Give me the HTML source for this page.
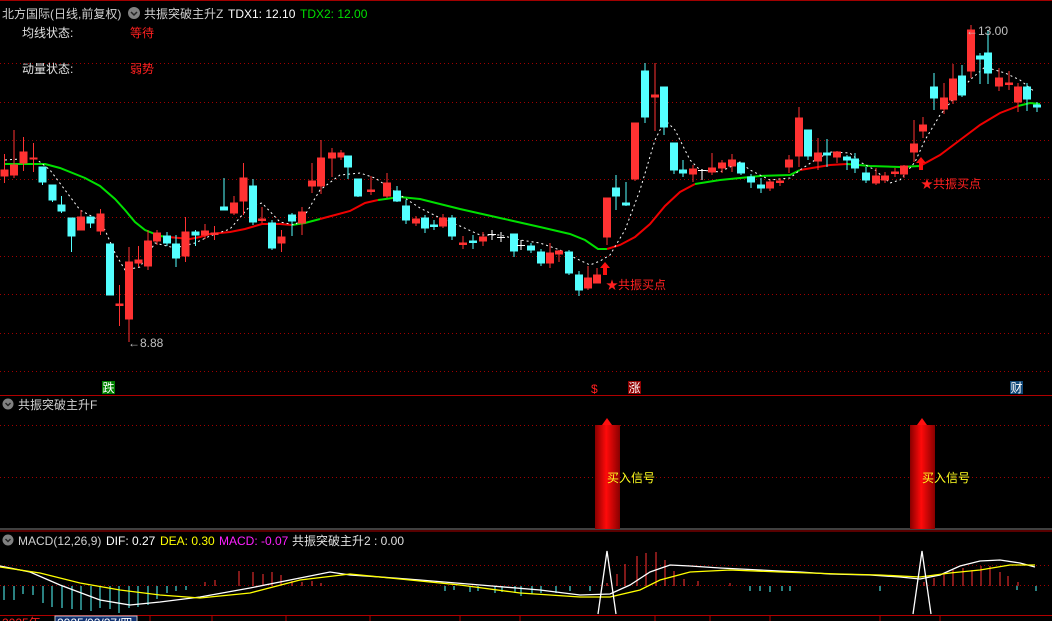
<!DOCTYPE html>
<html><head><meta charset="utf-8"><style>
html,body{margin:0;padding:0;background:#000;width:1052px;height:621px;overflow:hidden}
svg{display:block}
text{font-family:"Liberation Sans","Noto Sans CJK SC",sans-serif;font-size:12px}
</style></head><body>
<svg width="1052" height="621" viewBox="0 0 1052 621" xmlns="http://www.w3.org/2000/svg">
<g stroke="#a00000" stroke-dasharray="1,3" stroke-width="1">
<line x1="0" y1="63.5" x2="1052" y2="63.5"/><line x1="0" y1="102.5" x2="1052" y2="102.5"/>
<line x1="0" y1="140.5" x2="1052" y2="140.5"/><line x1="0" y1="179.5" x2="1052" y2="179.5"/>
<line x1="0" y1="217.5" x2="1052" y2="217.5"/><line x1="0" y1="256.5" x2="1052" y2="256.5"/>
<line x1="0" y1="294.5" x2="1052" y2="294.5"/><line x1="0" y1="333.5" x2="1052" y2="333.5"/>
<line x1="0" y1="371.5" x2="1052" y2="371.5"/>
<line x1="0" y1="425.5" x2="1052" y2="425.5"/><line x1="0" y1="477.5" x2="1052" y2="477.5"/>
<line x1="0" y1="565.5" x2="1052" y2="565.5"/><line x1="0" y1="585.5" x2="1052" y2="585.5"/>
</g>
<line x1="0" y1="0.5" x2="1052" y2="0.5" stroke="#a00000"/>
<line x1="0" y1="395.5" x2="1052" y2="395.5" stroke="#b00000"/>
<line x1="0" y1="529" x2="1052" y2="529" stroke="#808080"/>
<line x1="0" y1="531" x2="1052" y2="531" stroke="#b00000"/>
<line x1="0" y1="615.5" x2="1052" y2="615.5" stroke="#b00000"/>

<text x="2" y="18" fill="#d0d0d0" font-size="13">北方国际(日线,前复权)</text>
<circle cx="134" cy="13" r="6" fill="#808080"/><path d="M131 12l3 3 3-3" stroke="#222" fill="none" stroke-width="1.5"/>
<text x="144" y="18" fill="#d0d0d0" font-size="13">共振突破主升Z</text>
<text x="228" y="18" fill="#fff" font-size="13">TDX1: 12.10</text>
<text x="300" y="18" fill="#00e000" font-size="13">TDX2: 12.00</text>
<text x="22" y="37" fill="#e0e0e0" font-size="13">均线状态:</text>
<text x="130" y="37" fill="#ff2020" font-size="13">等待</text>
<text x="22" y="73" fill="#e0e0e0" font-size="13">动量状态:</text>
<text x="130" y="73" fill="#ff2020" font-size="13">弱势</text>

<polyline fill="none" stroke="#00e000" stroke-width="2" points="4,164 45,164 60,168 85,178 100,186 115,199 125,210 135,222 145,230 160,236 168,237"/>
<polyline fill="none" stroke="#ee0000" stroke-width="2" points="168,237 190,239 200,237 210,234 230,232 245,229 262,224 280,224 292,225"/>
<polyline fill="none" stroke="#00e000" stroke-width="2" points="292,225 305,223 320,219"/>
<polyline fill="none" stroke="#ee0000" stroke-width="2" points="320,219 335,215 350,211 365,203 378,200"/>
<polyline fill="none" stroke="#00e000" stroke-width="2" points="378,200 400,197 420,199 440,204 460,209 500,218 540,227 570,234 585,240 598,249 607,249"/>
<polyline fill="none" stroke="#ee0000" stroke-width="2" points="607,249 620,245 635,237 650,224 665,206 680,192 695,184"/>
<polyline fill="none" stroke="#00e000" stroke-width="2" points="695,184 720,180 760,176 790,175 800,170"/>
<polyline fill="none" stroke="#ee0000" stroke-width="2" points="800,170 830,165 847,164"/>
<polyline fill="none" stroke="#00e000" stroke-width="2" points="847,164 870,166 900,167 920,166"/>
<polyline fill="none" stroke="#ee0000" stroke-width="2" points="920,166 940,155 960,140 980,125 1000,113 1018,106"/>
<polyline fill="none" stroke="#00e000" stroke-width="2" points="1018,106 1030,103 1040,104"/>
<polyline fill="none" stroke="#fff" stroke-width="1" stroke-dasharray="2,3" points="5,160 35,158 50,170 65,190 80,210 95,218 105,230 115,253 125,270 140,267 155,243 175,248 195,243 210,236 230,229 250,206 262,203 280,222 295,225 305,215 320,190 340,175 360,173 375,178 390,188 400,195 420,208 440,218 460,226 480,235 500,235 520,240 540,243 560,250 575,258 590,265 600,261 610,255 625,230 640,190 655,140 665,120 675,130 690,160 700,170 720,172 740,162 750,170 770,180 790,178 800,170 815,160 830,152 850,153 860,162 875,170 890,183 900,180 915,162 925,140 940,115 955,97 970,80 985,67 1005,73 1020,80 1035,92"/>

<g stroke-width="1">
<g fill="#ff3232" stroke="#ff3232">
<line x1="4.5" y1="154" x2="4.5" y2="183"/><rect x="1" y="170" width="7" height="6"/>
<line x1="14" y1="130" x2="14" y2="178"/><rect x="10.5" y="165" width="7" height="10"/>
<line x1="23.5" y1="137" x2="23.5" y2="171"/><rect x="20" y="152" width="7" height="11"/>
<line x1="33.5" y1="143" x2="33.5" y2="172"/><rect x="30" y="158" width="7" height="1"/>
<line x1="81" y1="210" x2="81" y2="230"/><rect x="77.5" y="217" width="7" height="13"/>
<line x1="100.5" y1="209" x2="100.5" y2="235"/><rect x="97" y="214" width="7" height="17"/>
<line x1="119.5" y1="285" x2="119.5" y2="326"/><rect x="116" y="304" width="7" height="1.5"/>
<line x1="129" y1="247" x2="129" y2="342"/><rect x="125.5" y="262" width="7" height="57"/>
<line x1="138.5" y1="246" x2="138.5" y2="267"/><rect x="135" y="260" width="7" height="3"/>
<line x1="148" y1="230" x2="148" y2="270"/><rect x="144.5" y="241" width="7" height="25"/>
<line x1="157" y1="230" x2="157" y2="245"/><rect x="153.5" y="233" width="7" height="8"/>
<line x1="185.5" y1="217" x2="185.5" y2="262"/><rect x="182" y="232" width="7" height="24"/>
<line x1="205" y1="224" x2="205" y2="239"/><rect x="201.5" y="231" width="7" height="4"/>
<line x1="214.5" y1="226" x2="214.5" y2="240"/><rect x="211" y="233" width="7" height="1.5"/>
<line x1="234" y1="196" x2="234" y2="215"/><rect x="230.5" y="203" width="7" height="10"/>
<line x1="243.5" y1="163" x2="243.5" y2="215"/><rect x="240" y="178" width="7" height="23"/>
<line x1="262" y1="207" x2="262" y2="223"/><rect x="258.5" y="219" width="7" height="1.5"/>
<line x1="281.5" y1="230" x2="281.5" y2="252"/><rect x="278" y="237" width="7" height="6"/>
<line x1="302" y1="207" x2="302" y2="235"/><rect x="298.5" y="212" width="7" height="11"/>
<line x1="312" y1="163" x2="312" y2="193"/><rect x="308.5" y="181" width="7" height="5"/>
<line x1="321" y1="140" x2="321" y2="194"/><rect x="317.5" y="158" width="7" height="28"/>
<line x1="332" y1="148" x2="332" y2="177"/><rect x="328.5" y="153" width="7" height="5"/>
<line x1="341" y1="150" x2="341" y2="160"/><rect x="338" y="153" width="6" height="4"/>
<line x1="371" y1="176" x2="371" y2="195"/><rect x="367.5" y="190" width="7" height="1.5"/>
<line x1="387" y1="173" x2="387" y2="198"/><rect x="383.5" y="183" width="7" height="13"/>
<line x1="416" y1="216" x2="416" y2="226"/><rect x="412.5" y="219" width="7" height="4"/>
<line x1="443" y1="214" x2="443" y2="228"/><rect x="439.5" y="218" width="7" height="8"/>
<line x1="463" y1="236" x2="463" y2="249"/><rect x="459.5" y="243" width="7" height="1.5"/>
<line x1="483" y1="232" x2="483" y2="246"/><rect x="479.5" y="237" width="7" height="4"/>
<line x1="550" y1="243" x2="550" y2="268"/><rect x="546.5" y="253" width="7" height="10"/>
<line x1="559" y1="250" x2="559" y2="262"/><rect x="555.5" y="251" width="7" height="3"/>
<line x1="588" y1="266" x2="588" y2="290"/><rect x="584.5" y="278" width="7" height="10"/>
<line x1="597" y1="268" x2="597" y2="283"/><rect x="593.5" y="275" width="7" height="8"/>
<line x1="607" y1="198" x2="607" y2="245"/><rect x="603.5" y="198" width="7" height="39"/>
<line x1="635" y1="123" x2="635" y2="181"/><rect x="631.5" y="123" width="7" height="56"/>
<line x1="655" y1="63" x2="655" y2="131"/><rect x="651.5" y="95" width="7" height="2"/>
<line x1="693" y1="165" x2="693" y2="182"/><rect x="689.5" y="169" width="7" height="5"/>
<line x1="712" y1="153" x2="712" y2="175"/><rect x="708.5" y="168" width="7" height="4"/>
<line x1="722" y1="160" x2="722" y2="173"/><rect x="718.5" y="163" width="7" height="5"/>
<line x1="732" y1="154" x2="732" y2="172"/><rect x="728.5" y="160" width="7" height="6"/>
<line x1="770" y1="180" x2="770" y2="191"/><rect x="766.5" y="182" width="7" height="6"/>
<line x1="780" y1="178" x2="780" y2="186"/><rect x="776.5" y="181" width="7" height="1.5"/>
<line x1="789" y1="155" x2="789" y2="173"/><rect x="785.5" y="160" width="7" height="7"/>
<line x1="799" y1="107" x2="799" y2="167"/><rect x="795.5" y="118" width="7" height="38"/>
<line x1="818" y1="138" x2="818" y2="170"/><rect x="814.5" y="153" width="7" height="8"/>
<line x1="837" y1="151" x2="837" y2="163"/><rect x="833.5" y="152" width="7" height="5"/>
<line x1="876" y1="168" x2="876" y2="185"/><rect x="872.5" y="176" width="7" height="7"/>
<line x1="885" y1="172" x2="885" y2="183"/><rect x="881.5" y="176" width="7" height="4"/>
<line x1="895" y1="168" x2="895" y2="177"/><rect x="891.5" y="172" width="7" height="1.5"/>
<line x1="904" y1="165" x2="904" y2="178"/><rect x="900.5" y="166" width="7" height="8"/>
<line x1="914" y1="120" x2="914" y2="162"/><rect x="910.5" y="144" width="7" height="8"/>
<line x1="923" y1="117" x2="923" y2="138"/><rect x="919.5" y="125" width="7" height="6"/>
<line x1="944" y1="83" x2="944" y2="114"/><rect x="940.5" y="98" width="7" height="11"/>
<line x1="953" y1="64" x2="953" y2="104"/><rect x="949.5" y="79" width="7" height="21"/>
<line x1="971" y1="25" x2="971" y2="78"/><rect x="967.5" y="30" width="7" height="41"/>
<line x1="999" y1="68" x2="999" y2="91"/><rect x="995.5" y="78" width="7" height="8"/>
<line x1="1009" y1="71" x2="1009" y2="90"/><rect x="1005.5" y="83" width="7" height="1.5"/>
<line x1="1018" y1="83" x2="1018" y2="112"/><rect x="1014.5" y="87" width="7" height="15"/>
</g>
<g fill="#54ffff" stroke="#54ffff">
<line x1="42.5" y1="167" x2="42.5" y2="185"/><rect x="39" y="167" width="7" height="15"/>
<line x1="52.5" y1="185" x2="52.5" y2="202"/><rect x="49" y="185" width="7" height="15"/>
<line x1="61.5" y1="196" x2="61.5" y2="213"/><rect x="58" y="205" width="7" height="6"/>
<line x1="71.5" y1="218" x2="71.5" y2="252"/><rect x="68" y="218" width="7" height="18"/>
<line x1="90.5" y1="217" x2="90.5" y2="228"/><rect x="87" y="217" width="7" height="6"/>
<line x1="110" y1="244" x2="110" y2="295"/><rect x="106.5" y="244" width="7" height="51"/>
<line x1="167" y1="232" x2="167" y2="246"/><rect x="163.5" y="236" width="7" height="7"/>
<line x1="176" y1="235" x2="176" y2="267"/><rect x="172.5" y="244" width="7" height="14"/>
<line x1="195.5" y1="230" x2="195.5" y2="246"/><rect x="192" y="232" width="7" height="3"/>
<line x1="224" y1="178" x2="224" y2="210"/><rect x="220.5" y="207" width="7" height="3"/>
<line x1="253" y1="179" x2="253" y2="225"/><rect x="249.5" y="186" width="7" height="36"/>
<line x1="272" y1="220" x2="272" y2="250"/><rect x="268.5" y="223" width="7" height="25"/>
<line x1="292" y1="213" x2="292" y2="236"/><rect x="288.5" y="215" width="7" height="6"/>
<line x1="348" y1="156" x2="348" y2="179"/><rect x="344.5" y="156" width="7" height="11"/>
<line x1="358" y1="179" x2="358" y2="197"/><rect x="354.5" y="179" width="7" height="17"/>
<line x1="397" y1="186" x2="397" y2="202"/><rect x="393.5" y="191" width="7" height="10"/>
<line x1="406" y1="200" x2="406" y2="224"/><rect x="402.5" y="206" width="7" height="14"/>
<line x1="425" y1="215" x2="425" y2="233"/><rect x="421.5" y="218" width="7" height="10"/>
<line x1="434" y1="220" x2="434" y2="230"/><rect x="430.5" y="225" width="7" height="1.5"/>
<line x1="452" y1="215" x2="452" y2="240"/><rect x="448.5" y="218" width="7" height="18"/>
<line x1="473" y1="235" x2="473" y2="249"/><rect x="469.5" y="241" width="7" height="1.5"/>
<line x1="514" y1="234" x2="514" y2="257"/><rect x="510.5" y="234" width="7" height="17"/>
<line x1="531" y1="243" x2="531" y2="253"/><rect x="527.5" y="246" width="7" height="4"/>
<line x1="541" y1="249" x2="541" y2="266"/><rect x="537.5" y="252" width="7" height="11"/>
<line x1="569" y1="250" x2="569" y2="275"/><rect x="565.5" y="252" width="7" height="21"/>
<line x1="579" y1="271" x2="579" y2="296"/><rect x="575.5" y="275" width="7" height="15"/>
<line x1="616" y1="175" x2="616" y2="210"/><rect x="612.5" y="188" width="7" height="8"/>
<line x1="626" y1="182" x2="626" y2="206"/><rect x="622.5" y="203" width="7" height="2"/>
<line x1="645" y1="63" x2="645" y2="123"/><rect x="641.5" y="71" width="7" height="46"/>
<line x1="664" y1="87" x2="664" y2="135"/><rect x="660.5" y="87" width="7" height="40"/>
<line x1="674" y1="143" x2="674" y2="174"/><rect x="670.5" y="143" width="7" height="27"/>
<line x1="683" y1="160" x2="683" y2="177"/><rect x="679.5" y="170" width="7" height="3"/>
<line x1="741" y1="163" x2="741" y2="175"/><rect x="737.5" y="163" width="7" height="10"/>
<line x1="751" y1="174" x2="751" y2="188"/><rect x="747.5" y="177" width="7" height="5"/>
<line x1="761" y1="178" x2="761" y2="193"/><rect x="757.5" y="185" width="7" height="3"/>
<line x1="808" y1="130" x2="808" y2="160"/><rect x="804.5" y="130" width="7" height="26"/>
<line x1="827" y1="139" x2="827" y2="167"/><rect x="823.5" y="153" width="7" height="2"/>
<line x1="847" y1="155" x2="847" y2="170"/><rect x="843.5" y="157" width="7" height="3"/>
<line x1="855" y1="153" x2="855" y2="173"/><rect x="851.5" y="159" width="7" height="9"/>
<line x1="866" y1="167" x2="866" y2="183"/><rect x="862.5" y="173" width="7" height="7"/>
<line x1="934" y1="73" x2="934" y2="110"/><rect x="930.5" y="87" width="7" height="11"/>
<line x1="962" y1="65" x2="962" y2="97"/><rect x="958.5" y="76" width="7" height="19"/>
<line x1="980" y1="53" x2="980" y2="84"/><rect x="976.5" y="56" width="7" height="3"/>
<line x1="988" y1="30" x2="988" y2="84"/><rect x="984.5" y="53" width="7" height="20"/>
<line x1="1027" y1="83" x2="1027" y2="111"/><rect x="1023.5" y="87" width="7" height="12"/>
<line x1="1037" y1="102" x2="1037" y2="112"/><rect x="1033.5" y="105" width="7" height="2"/>
</g>
<g stroke="#fff"><line x1="492" y1="230" x2="492" y2="240"/><line x1="488" y1="234.5" x2="496" y2="234.5"/>
<line x1="501" y1="232" x2="501" y2="242"/><line x1="497" y1="237.5" x2="505" y2="237.5"/>
<line x1="521" y1="240" x2="521" y2="250"/><line x1="517" y1="245.5" x2="525" y2="245.5"/>
<line x1="702" y1="169" x2="702" y2="180"/><line x1="698" y1="170.5" x2="706" y2="170.5"/></g>
</g>

<text x="128" y="347" fill="#c0c0c0" font-size="12">←8.88</text>
<text x="966" y="35" fill="#c0c0c0" font-size="12">←13.00</text>
<path d="M605 262l-5 6h3v7h4v-7h3z" fill="#ff1010"/>
<text x="606" y="289" fill="#ff2020" font-size="13">★共振买点</text>
<path d="M921 157l-5 6h3v7h4v-7h3z" fill="#ff1010"/>
<text x="921" y="188" fill="#ff2020" font-size="13">★共振买点</text>
<rect x="102" y="381" width="13" height="13" fill="#008000"/>
<text x="102.5" y="392" fill="#fff" font-size="12">跌</text>
<text x="591" y="393" fill="#ff2020" font-size="12">$</text>
<rect x="628" y="381" width="13" height="13" fill="#900000"/>
<text x="628.5" y="392" fill="#fff" font-size="12">涨</text>
<rect x="1010" y="381" width="13" height="13" fill="#104878"/>
<text x="1010.5" y="392" fill="#fff" font-size="12">财</text>

<circle cx="8" cy="404" r="5.5" fill="#808080"/><path d="M5.5 403l2.5 2.5 2.5-2.5" stroke="#222" fill="none" stroke-width="1.4"/>
<text x="18" y="409" fill="#d0d0d0" font-size="12">共振突破主升F</text>
<defs><linearGradient id="g" x1="0" x2="1"><stop offset="0" stop-color="#880000"/><stop offset="0.45" stop-color="#ff0a0a"/><stop offset="1" stop-color="#880000"/></linearGradient></defs>
<rect x="595" y="425" width="25" height="104" fill="url(#g)"/>
<path d="M607 418l-5 7h10z" fill="#ff1010"/>
<rect x="910" y="425" width="25" height="104" fill="url(#g)"/>
<path d="M922 418l-5 7h10z" fill="#ff1010"/>
<text x="607" y="482" fill="#ffff20" font-size="12">买入信号</text>
<text x="922" y="482" fill="#ffff20" font-size="12">买入信号</text>

<circle cx="8" cy="540" r="5.5" fill="#808080"/><path d="M5.5 539l2.5 2.5 2.5-2.5" stroke="#222" fill="none" stroke-width="1.4"/>
<text x="18" y="545" fill="#d0d0d0" font-size="12">MACD(12,26,9)</text>
<text x="106" y="545" fill="#fff" font-size="12">DIF: 0.27</text>
<text x="160" y="545" fill="#ffff00" font-size="12">DEA: 0.30</text>
<text x="219" y="545" fill="#ff20ff" font-size="12">MACD: -0.07</text>
<text x="292" y="545" fill="#e0e0e0" font-size="12">共振突破主升2 : 0.00</text>
<g stroke="#54ffff" stroke-width="1">
<path d="M4 586v14M14 586v14M23 586v8M33 586v9M43 586v17M52 586v21M62 586v22M72 586v23M81 586v24M91 586v25M100 586v22M110 586v23M119 586v27M129 586v22M138 586v21M148 586v19M157 586v13M167 586v7M176 586v5M186 586v4M445 586v5M454 586v4M470 586v6M478 586v5M495 586v7M502 586v6M515 586v7M521 586v10M532 586v8M541 586v7M556 586v7M570 586v5M590 586v5M750 586v5M760 586v5M770 586v6M782 586v5M790 586v5M880 586v5M1017 586v4M1036 586v5"/>
</g>
<g stroke="#ff3232" stroke-width="1">
<path d="M205 586v-4M215 586v-6M239 586v-15M253 586v-14M263 586v-12M272 586v-14M281 586v-11M292 586v-5M302 586v-4M312 586v-5M321 586v-3M607 586v-3M617 586v-12M625 586v-22M637 586v-30M646 586v-33M656 586v-34M665 586v-26M674 586v-15M684 586v-7M698 586v-5M730 586v-3M924 586v-4M934 586v-8M944 586v-12M953 586v-16M963 586v-18M972 586v-16M981 586v-20M990 586v-20M1000 586v-14M1008 586v-10M1018 586v-4"/>
</g>
<polyline fill="none" stroke="#fff" stroke-width="1.3" points="0,566 30,572 60,585 100,600 130,605 160,602 200,597 250,588 300,578 330,572 350,575 380,577 420,580 480,585 540,590 580,595 610,594 630,585 650,572 670,565 690,566 720,568 760,570 800,572 830,574 870,575 900,577 920,579 940,575 960,566 980,561 1000,560 1020,563 1035,567"/>
<polyline fill="none" stroke="#ffff00" stroke-width="1.3" points="0,567 40,573 80,583 120,590 160,595 200,598 250,593 300,580 350,574 400,579 460,585 520,593 580,597 610,597 640,590 660,580 690,572 730,570 780,572 840,574 880,575 920,577 950,573 980,570 1010,565 1035,565"/>
<path d="M598 614L607 551L616 614" fill="none" stroke="#fff" stroke-width="1.3"/>
<path d="M913 614L922 551L931 614" fill="none" stroke="#fff" stroke-width="1.3"/>

<g stroke="#b00000"><path d="M55 616v5M150 616v5M212 616v5M286 616v5M370 616v5M460 616v5M520 616v5M655 616v5M710 616v5M770 616v5M880 616v5M940 616v5"/></g>
<text x="2" y="627" fill="#ff2020" font-size="12">2025年</text>
<rect x="55" y="616" width="82" height="6" fill="#103070" stroke="#c0c0c0"/>
<text x="57" y="627" fill="#fff" font-size="12">2025/02/27/四</text>
</svg>
</body></html>
